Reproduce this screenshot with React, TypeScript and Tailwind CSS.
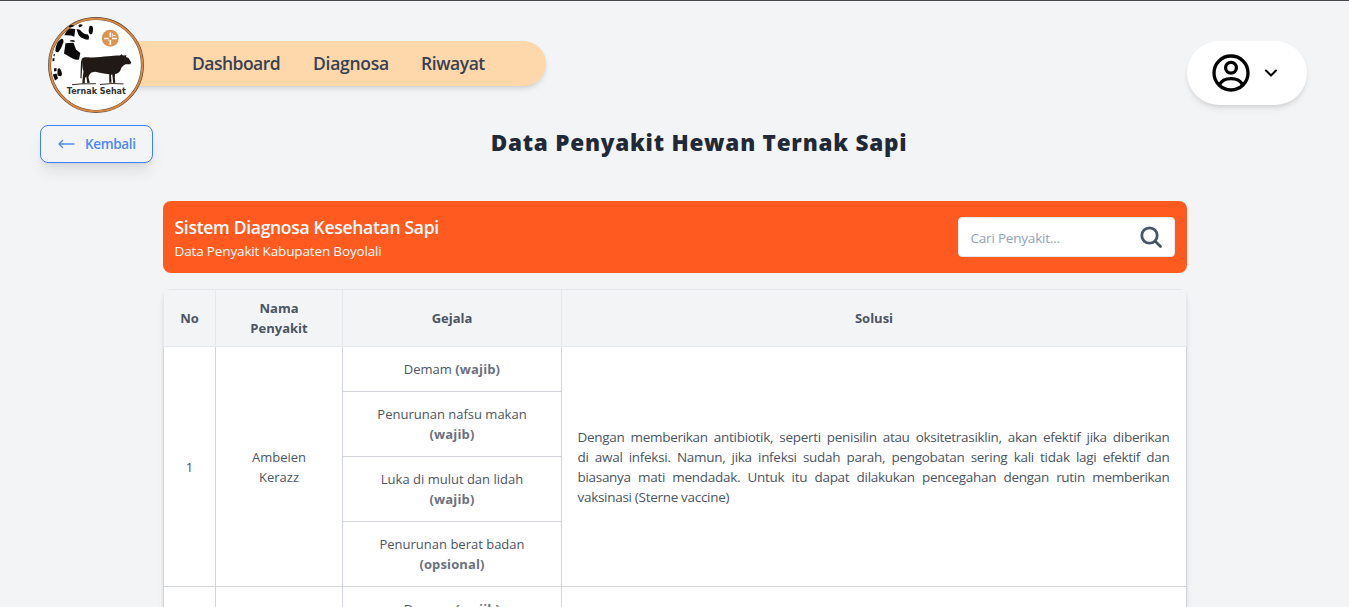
const gejala = [
  { nama: "Demam", sifat: "(wajib)", wrap: false },
  { nama: "Penurunan nafsu makan", sifat: "(wajib)", wrap: true },
  { nama: "Luka di mulut dan lidah", sifat: "(wajib)", wrap: true },
  { nama: "Penurunan berat badan", sifat: "(opsional)", wrap: true },
];

const solusi = [
  "Dengan memberikan antibiotik, seperti penisilin atau oksitetrasiklin, akan efektif jika diberikan",
  "di awal infeksi. Namun, jika infeksi sudah parah, pengobatan sering kali tidak lagi efektif dan",
  "biasanya mati mendadak. Untuk itu dapat dilakukan pencegahan dengan rutin memberikan",
];

function Logo() {
  return (
    <svg viewBox="0 0 96 96" className="relative z-10 size-24 shrink-0" aria-label="Ternak Sehat">
      <circle cx="48" cy="48" r="46.4" fill="#fff" stroke="#5a4438" strokeWidth="3" />
      <circle cx="48" cy="48" r="46.3" fill="none" stroke="#d88a45" strokeWidth="1.9" />
      <g fill="#0b0909">
        <path d="M30.500 8.300Q32.500 6.500 34.800 8Q33.500 10.300 31 10.300Z" />
        <path d="M20.700 9.300Q23 7.300 25.800 8.300L25.500 9.600 21 10.500Z" />
        <path d="M16.300 18.300Q18.500 13 22 11.500L27.300 12 26.300 19.700Q23 18 16.300 18.300Z" />
        <path d="M28.500 12.500Q31.500 11.500 33.500 14.500Q36 17.500 40 17.500Q42 20 40.500 22.800Q35 22.500 31 18.800Z" />
        <path d="M41.500 9Q44.500 7.800 45 11Q45.300 16.500 43 17.500Q40.500 17 40.700 13Z" />
        <path d="M7.300 34Q8 24 13.500 21.700Q16 21.300 15.300 25.500Q13.500 31.500 10.500 35Q8.500 36 7.300 34Z" />
        <path d="M17.500 26.300 25.500 25.700 28 32.500 32.300 36 31 42.500Q28 43 25 41.700L16 36.500Z" />
        <path d="M21.500 24.300Q23.500 21.800 26.800 23.800L26.500 25Z" />
        <path d="M5 38 7 36.800 6.500 39.500ZM4.500 41.500 6.500 41 6.300 44 4.500 44.300Z" />
        <path d="M5.800 51.500 8.500 51 8.500 54 6.300 54.500Z" />
        <path d="M9.500 52.500Q11.500 50 12.800 53Q15 57 13 59.300L9.500 58.500Z" />
        <path d="M4.800 57.500 8.500 56.500 10 61.500 7 63.500Z" />
      </g>
      <circle cx="62.3" cy="21.3" r="8.5" fill="#de9350" />
      <g stroke="#fff" strokeWidth="1.7" fill="none">
        <path d="M62.3 15.500v4.300M62.300 23v4.800M56 21.500h4.700M64 21.500h5" />
        <path d="M64.800 18.700l-1 1.200M60.300 23.800l1-1.200M64.500 16.500v2h3" strokeWidth=".8" />
      </g>
      <path
        fill="#211915"
        d="M33.800 42C35 40 38 40.300 42 40.400C49 40.600 54 39.800 60 39.300C65 38.800 69 38.300 72 38.500L73.500 37.300L75 38.500L78.500 38.300L78 40L80.500 41L83.300 45.500L82.300 47.300L77.500 47.200C75 48.500 73.500 50 72.700 52.500C72 55 70 56.500 67 57L66.800 60.500L67.300 65.800L65.200 66L64.700 61L64.200 57.500L63 58L63.500 65.700L61.300 65.800L61.200 57.200C56 57 52 56 47 54.800L43.500 55.500C41.500 57 40.500 58.500 40.500 61L41.800 65.800L39.300 66L38.300 59.500L37 61L36.700 66.500L34.300 66.600L34.800 60L35.500 54.500C34 51 34.800 47 34.500 45L33.500 61.500L32.400 61L33 45Z"
      />
      <path d="M24 67.700 33 66.900 48 66.700M52 67.500 64 66.500 75.500 66.900" stroke="#211915" strokeWidth="0.9" fill="none" />
      <text
        x="18.8"
        y="77.4"
        textLength="59"
        lengthAdjust="spacingAndGlyphs"
        fill="#333"
        className="font-['DejaVu_Sans',sans-serif] text-[8.3px] font-bold"
      >
        Ternak Sehat
      </text>
    </svg>
  );
}

function Navbar() {
  return (
    <header className="flex h-[96px] items-start justify-between pr-[42px] pl-12">
      <div className="flex">
        <Logo />
        <nav className="mt-6 -ml-12 flex h-[45px] w-[450px] items-center gap-8 rounded-r-full bg-[#fed7aa] pl-24 text-[17.5px] font-semibold text-[#374151] shadow-md">
          <a className="w-[89px] whitespace-nowrap tracking-[-0.03em]">Dashboard</a>
          <a className="w-[76px] whitespace-nowrap tracking-[-0.015em]">Diagnosa</a>
          <a className="whitespace-nowrap tracking-[-0.025em]">Riwayat</a>
        </nav>
      </div>
      <button className="mt-6 flex h-16 w-30 items-center rounded-full bg-white pl-[25px] shadow-md">
        <svg viewBox="0 0 38 38" className="size-[38px]" fill="none" stroke="#000" strokeWidth="3.3">
          <circle cx="19" cy="19" r="17" />
          <circle cx="19" cy="13.8" r="5.4" />
          <path d="M7.3 31C9.5 26.5 14 24.6 19 24.6S28.500 26.500 30.700 31" />
        </svg>
        <svg viewBox="0 0 16 16" className="ml-[13px] size-4" fill="none" stroke="#000" strokeWidth="2.100" strokeLinecap="round" strokeLinejoin="round">
          <path d="M3 5.600 8 10.600 13 5.600" />
        </svg>
      </button>
    </header>
  );
}

function DiseaseTable() {
  const body = "border border-[#d1d5db] bg-white";
  const head = "border border-[#e5e7eb] pl-px font-bold";
  return (
    <div className="mt-4 overflow-hidden rounded-lg shadow-md">
      <table className="w-full table-fixed border-collapse text-center text-[13px] leading-5 text-[#4b5563]">
        <colgroup>
          <col className="w-[52px]" />
          <col className="w-[127px]" />
          <col className="w-[219px]" />
          <col />
        </colgroup>
        <thead>
          <tr className="h-[57px] bg-[#f3f4f6]">
            <th className={head}>No</th>
            <th className={head}>Nama<br />Penyakit</th>
            <th className={head}>Gejala</th>
            <th className={head}>Solusi</th>
          </tr>
        </thead>
        <tbody>
          {gejala.map((g, i) => (
            <tr key={g.nama} className={g.wrap ? "h-[65px]" : "h-[45px]"}>
              {i === 0 && (
                <>
                  <td rowSpan={4} className={`${body} pl-px`}>1</td>
                  <td rowSpan={4} className={`${body} pl-px`}>Ambeien<br />Kerazz</td>
                </>
              )}
              <td className={`${body} pl-px`}>
                {g.nama}
                {g.wrap ? <br /> : " "}
                <b className="tracking-[0.01em] text-[#6b7280]">{g.sifat}</b>
              </td>
              {i === 0 && (
                <td rowSpan={4} className={`${body} px-4 text-left text-[13.5px] tracking-[-0.022em]`}>
                  {solusi.map((line) => (
                    <span key={line} className="block text-justify [text-align-last:justify]">
                      {line}
                    </span>
                  ))}
                  vaksinasi (Sterne vaccine)
                </td>
              )}
            </tr>
          ))}
          <tr className="h-[45px]">
            <td className={body} />
            <td className={body} />
            <td className={`${body} pl-px`}>
              Demam <b className="tracking-[0.01em] text-[#6b7280]">(wajib)</b>
            </td>
            <td className={body} />
          </tr>
        </tbody>
      </table>
    </div>
  );
}

export default function App() {
  return (
    <div className="h-[607px] overflow-hidden border-t border-[#45454b] bg-[#f3f4f6] pt-4 font-['Open_Sans','Noto_Sans',sans-serif]">
      <Navbar />
      <div className="mt-3 flex px-10">
        <button className="flex h-[38px] w-[113px] shrink-0 items-center rounded-lg border border-[#3b82f6] pl-[17px] text-[13.5px] font-semibold tracking-[-0.025em] text-[#5088f5] shadow-lg">
          <svg viewBox="0 0 17 10" className="mr-[10px] h-2.5 w-[17px]" fill="none" stroke="#5088f5" strokeWidth="1.300" strokeLinecap="round" strokeLinejoin="round">
            <path d="M16 5H1M4.500 1.500 1 5l3.500 3.500" />
          </svg>
          Kembali
        </button>
        <h1 className="mt-0.5 w-[1092px] text-center text-[22.5px] leading-8 font-extrabold tracking-[0.034em] text-[#1f2937]">
          Data Penyakit Hewan Ternak Sapi
        </h1>
      </div>
      <main className="mx-auto mt-[38px] w-[1024px]">
        <section className="flex h-[72px] items-center justify-between rounded-lg bg-[#ff5a1f] pr-3 pl-3 text-white">
          <div>
            <h2 className="text-[17.5px] leading-7 font-semibold tracking-[-0.017em]">Sistem Diagnosa Kesehatan Sapi</h2>
            <p className="text-[13.5px] leading-5 tracking-[-0.011em]">Data Penyakit Kabupaten Boyolali</p>
          </div>
          <div className="flex h-10 w-[217px] items-center justify-between rounded border border-[#e2e8f0] bg-white px-[11px]">
            <span className="pt-0.5 pl-px text-[13.5px] tracking-[-0.015em] text-[#94a3b8]">Cari Penyakit...</span>
            <svg viewBox="0 0 24 24" className="size-6" fill="none" stroke="#475569" strokeWidth="2.800" strokeLinecap="round">
              <circle cx="10.500" cy="10.500" r="7.700" />
              <path d="m16.500 16.500 5 5" />
            </svg>
          </div>
        </section>
        <DiseaseTable />
      </main>
    </div>
  );
}
